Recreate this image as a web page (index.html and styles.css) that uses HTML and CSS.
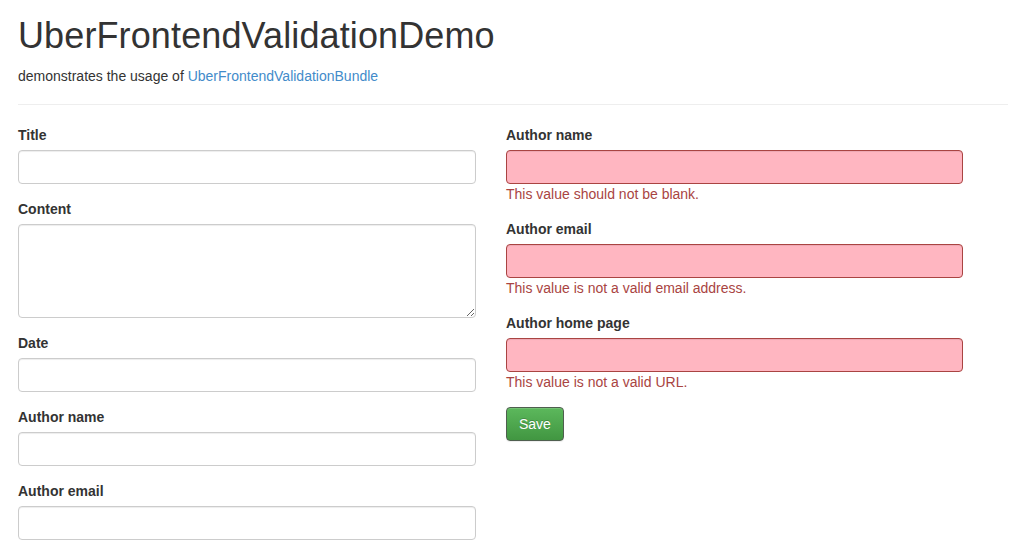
FILE: index.html
```html
<!DOCTYPE html>
<html lang="en">
<head>
<meta charset="utf-8">
<title>UberFrontendValidationDemo</title>
<link rel="stylesheet" href="styles.css">
</head>
<body>
<div class="container">
  <h1 class="title">UberFrontendValidationDemo</h1>
  <p class="lead-text">demonstrates the usage of <a href="#">UberFrontendValidationBundle</a></p>
  <hr class="divider">
  <div class="columns">
    <form class="col">
      <div class="form-group">
        <label class="label">Title</label>
        <input class="control" type="text">
      </div>
      <div class="form-group">
        <label class="label">Content</label>
        <textarea class="control area"></textarea>
      </div>
      <div class="form-group">
        <label class="label">Date</label>
        <input class="control" type="text">
      </div>
      <div class="form-group">
        <label class="label">Author name</label>
        <input class="control" type="text">
      </div>
      <div class="form-group">
        <label class="label">Author email</label>
        <input class="control" type="text">
      </div>
    </form>
    <form class="col">
      <div class="form-group">
        <label class="label">Author name</label>
        <input class="control error" type="text">
        <div class="error-text">This value should not be blank.</div>
      </div>
      <div class="form-group">
        <label class="label">Author email</label>
        <input class="control error" type="text">
        <div class="error-text">This value is not a valid email address.</div>
      </div>
      <div class="form-group">
        <label class="label">Author home page</label>
        <input class="control error" type="text">
        <div class="error-text">This value is not a valid URL.</div>
      </div>
      <button class="btn-save" type="button">Save</button>
    </form>
  </div>
</div>
</body>
</html>
```
FILE: styles.css
```css
html, body {
  margin: 0;
  padding: 0;
  background: #fff;
}
body {
  font-family: "Liberation Sans", Arial, sans-serif;
  font-size: 14px;
  line-height: 20px;
  color: #333;
}
.container {
  padding: 0 1px 0 18px;
}
.title {
  margin: 16px 0 10px;
  font-size: 36px;
  line-height: 39.6px;
  font-weight: normal;
  letter-spacing: 0.12px;
  color: #333;
}
.lead-text {
  margin: 0;
}
.lead-text a {
  color: #428bca;
  text-decoration: none;
}
.divider {
  margin: 18px 0 20px;
  border: 0;
  border-top: 1px solid #eee;
  height: 0;
}
.columns {
  display: grid;
  grid-template-columns: 458px 457px;
  column-gap: 30px;
  align-items: start;
}
.col {
  margin: 0;
}
.form-group {
  margin-bottom: 15px;
}
.label {
  display: block;
  font-weight: bold;
  margin-bottom: 5px;
}
.control {
  display: block;
  box-sizing: border-box;
  width: 100%;
  height: 34px;
  margin: 0;
  padding: 6px 12px;
  font: inherit;
  color: #555;
  background: #fff;
  border: 1px solid #ccc;
  border-radius: 4px;
  box-shadow: inset 0 1px 1px rgba(0, 0, 0, 0.075);
}
.area {
  height: 94px;
  resize: vertical;
}
.control.error {
  background: #ffb6c1;
  border-color: #a94442;
}
.error-text {
  color: #a94442;
}
.btn-save {
  display: block;
  box-sizing: border-box;
  height: 34px;
  padding: 6px 12px;
  font: inherit;
  color: #fff;
  text-shadow: 0 -1px 0 rgba(0, 0, 0, 0.2);
  background-image: linear-gradient(to bottom, #5cb85c 0%, #419641 100%);
  border: 1px solid #4f5f4f;
  border-radius: 4px;
  box-shadow: inset 0 1px 0 rgba(255, 255, 255, 0.15), 0 1px 1px rgba(0, 0, 0, 0.075);
  cursor: pointer;
}
```
